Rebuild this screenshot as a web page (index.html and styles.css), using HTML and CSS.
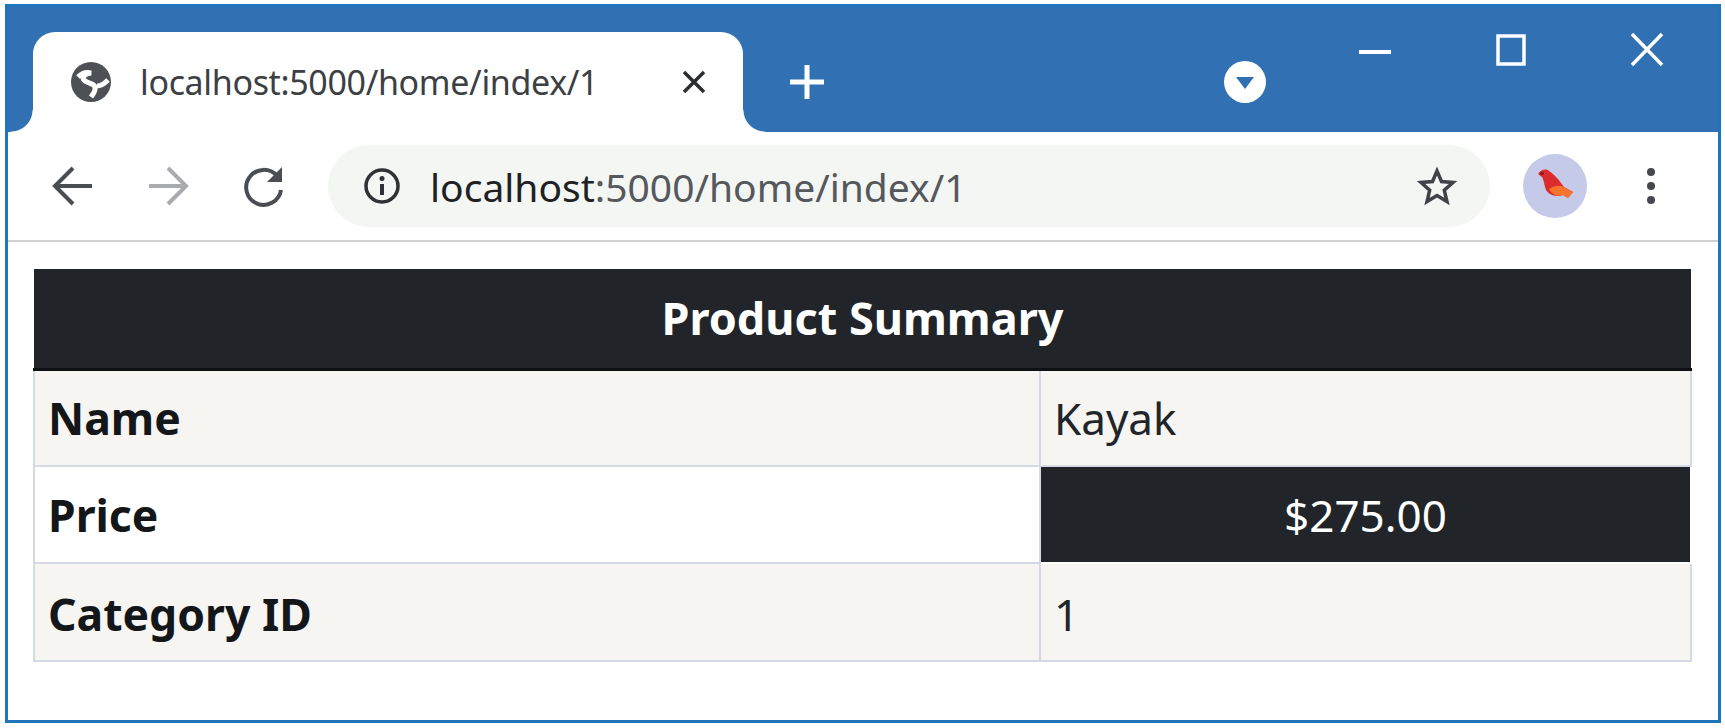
FILE: index.html

```html
<!DOCTYPE html>
<html lang="en">
<head>
  <meta charset="UTF-8">
  <title>localhost:5000/home/index/1</title>
  <link rel="stylesheet" href="styles.css">
</head>
<body>
<div class="window">

  <div class="tabstrip">
    <div class="tab">
      <svg class="globe" viewBox="0 0 42 42">
        <circle cx="21" cy="21" r="20" fill="#4d5055"/>
        <path d="M8 16C12 12 17 11 21 12C14 13 11 17 15 20C20 23 26 23 25 28C25 31 23 33 21 36M27 25C32 25 35 22 38 19" stroke="#fff" stroke-width="5" fill="none"/>
      </svg>
      <span class="tab-title">localhost:5000/home/index/1</span>
      <svg class="tab-close" viewBox="0 0 28 28">
        <path d="M4 4l20 20M24 4L4 24" stroke="#2b2d30" stroke-width="3.5" fill="none"/>
      </svg>
    </div>
    <div class="strip-icon new-tab">
      <svg viewBox="0 0 44 44" class="icon">
        <path d="M22 5v34M5 22h34" stroke="#fff" stroke-width="5" fill="none"/>
      </svg>
    </div>
    <div class="strip-icon tab-search">
      <svg viewBox="0 0 44 44" class="icon">
        <circle cx="22" cy="22" r="21" fill="#fff"/>
        <path d="M13 17h18l-9 12z" fill="#2f70b3"/>
      </svg>
    </div>
    <div class="win-controls">
      <svg viewBox="0 0 44 44" class="icon">
        <path d="M6 24h32" stroke="#fff" stroke-width="4" fill="none"/>
      </svg>
      <svg viewBox="0 0 44 44" class="icon">
        <rect x="9" y="8" width="26" height="28" stroke="#fff" stroke-width="3.500" fill="none"/>
      </svg>
      <svg viewBox="0 0 44 44" class="icon">
        <path d="M7 6l30 31M37 6L7 37" stroke="#fff" stroke-width="3.500" fill="none"/>
      </svg>
    </div>
  </div>

  <div class="toolbar">
    <svg viewBox="0 0 44 44" class="icon back">
      <path d="M41 22H5M22 4L4 22l18 18" stroke="#4a4d52" stroke-width="4" fill="none"/>
    </svg>
    <svg viewBox="0 0 44 44" class="icon forward">
      <path d="M3 22h36M22 4l18 18-18 18" stroke="#a9abae" stroke-width="4" fill="none"/>
    </svg>
    <svg viewBox="0 0 44 44" class="icon reload">
      <path d="M35 12a17.500 17.500 0 1 0 4 14" stroke="#4a4d52" stroke-width="4" fill="none"/>
      <path d="M40 3v15H25z" fill="#4a4d52"/>
    </svg>
    <div class="omnibox">
      <svg viewBox="0 0 36 36" class="info">
        <circle cx="18" cy="18" r="16" stroke="#2f3134" stroke-width="3.500" fill="none"/>
        <path d="M18 16v11" stroke="#2f3134" stroke-width="4" fill="none"/>
        <circle cx="18" cy="10.500" r="2.500" fill="#2f3134"/>
      </svg>
      <span class="url"><span class="host">localhost</span>:5000/home/index/1</span>
      <svg viewBox="0 0 44 44" class="icon star">
        <path d="M22 7l4.500 10.500 11.500 1-8.700 7.700 2.700 11.300-10-6-10 6 2.700-11.300L6 18.500l11.500-1z" stroke="#3f4246" stroke-width="3.500" fill="none"/>
      </svg>
    </div>
    <svg viewBox="0 0 64 64" class="avatar">
      <circle cx="32" cy="32" r="32" fill="#c5cae9"/>
      <path d="M15 20C17 16 23 14 26 17C31 20 37 27 41 33L50 38L45 44L40 41C34 43 27 42 23 36C21 31 21 26 19 23Z" fill="#dd2a2c"/>
      <path d="M26 35C32 31 37 31 41 33L50 38L45 44L40 41C35 43 29 41 26 35Z" fill="#f4742e"/>
      <circle cx="19" cy="19.500" r="1.800" fill="#8a1a1a"/>
    </svg>
    <svg viewBox="0 0 44 44" class="icon dots">
      <circle cx="22" cy="8" r="4" fill="#45484c"/>
      <circle cx="22" cy="22" r="4" fill="#45484c"/>
      <circle cx="22" cy="36" r="4" fill="#45484c"/>
    </svg>
  </div>

  <div class="content">
    <table class="summary">
      <colgroup>
        <col class="col-label">
        <col>
      </colgroup>
      <thead>
        <tr><th colspan="2">Product Summary</th></tr>
      </thead>
      <tbody>
        <tr class="striped"><th>Name</th><td>Kayak</td></tr>
        <tr><th>Price</th><td class="price">$275.00</td></tr>
        <tr class="striped last"><th>Category ID</th><td>1</td></tr>
      </tbody>
    </table>
  </div>

</div>
</body>
</html>
```

FILE: styles.css

```css
body { margin: 0; background: #fff; font-family: "Noto Sans", "Open Sans", sans-serif; color: #212529; }

.window {
  margin: 4px 4px 5px 5px;
  height: 713px;
  border: 3px solid #1f75bb;
  background: #fff;
}
.icon { width: 44px; height: 44px; flex: none; display: block; }

/* tab strip */
.tabstrip {
  display: flex;
  align-items: flex-end;
  height: 125px;
  background: #3070b3;
}
.tab {
  position: relative;
  display: flex;
  align-items: center;
  width: 710px;
  height: 100px;
  margin-left: 25px;
  padding: 0 35px 0 37px;
  box-sizing: border-box;
  background: #fff;
  border-radius: 22px 22px 0 0;
}
.tab::before, .tab::after {
  content: "";
  position: absolute;
  bottom: 0;
  width: 22px;
  height: 22px;
}
.tab::before { left: -22px; background: radial-gradient(circle at 0 0, #3070b3 21px, #fff 22px); }
.tab::after { right: -22px; background: radial-gradient(circle at 100% 0, #3070b3 21px, #fff 22px); }
.globe { width: 42px; height: 42px; flex: none; }
.tab-title { flex: 1; margin-left: 28px; font-size: 34px; color: #3c3f43; white-space: nowrap; letter-spacing: -0.35px; }
.tab-close { width: 28px; height: 28px; flex: none; }
.strip-icon { display: flex; align-items: center; height: 100px; }
.new-tab { margin-left: 42px; }
.tab-search { margin-left: 394px; }
.win-controls {
  display: flex;
  gap: 92px;
  align-self: flex-start;
  margin: 21px 0 0 86px;
}

/* address bar */
.toolbar {
  display: flex;
  align-items: center;
  height: 108px;
  padding-left: 43px;
  border-bottom: 2px solid #d0d0d0;
}
.forward { margin-left: 51px; }
.reload { margin-left: 52px; }
.omnibox {
  display: flex;
  align-items: center;
  width: 1162px;
  height: 82px;
  margin-left: 42px;
  padding: 0 31px 0 36px;
  box-sizing: border-box;
  background: #f3f6f3;
  border-radius: 41px;
}
.info { width: 36px; height: 36px; flex: none; }
.url { flex: 1; margin-left: 30px; font-size: 39px; color: #55585c; white-space: nowrap; }
.host { color: #202124; }
.avatar { width: 64px; height: 64px; flex: none; margin-left: 33px; }
.dots { margin-left: 42px; }

/* product table */
.content { padding: 27px 26px 0 25px; }
.summary {
  width: 100%;
  table-layout: fixed;
  border-collapse: collapse;
  font-size: 44px;
  line-height: 60px;
}
.col-label { width: 1006px; }
.summary th, .summary td {
  height: 97px;
  box-sizing: border-box;
  padding: 0 13px;
  border: 2px solid #d5d9e3;
  text-align: left;
  font-weight: 400;
}
.summary tbody th { font-weight: 700; font-size: 44.5px; color: #14171a; }
.summary thead th {
  height: 100px;
  border: 0;
  border-bottom: 3px solid #0e1013;
  background: #212529;
  color: #fff;
  text-align: center;
  font-size: 45px;
  font-weight: 700;
}
.striped { background: #f6f5f1; }
.summary .last th, .summary .last td { height: 98px; padding-top: 3px; }
.summary td.price { background: #212529; border-color: #fff; color: #fff; text-align: center; }
```
